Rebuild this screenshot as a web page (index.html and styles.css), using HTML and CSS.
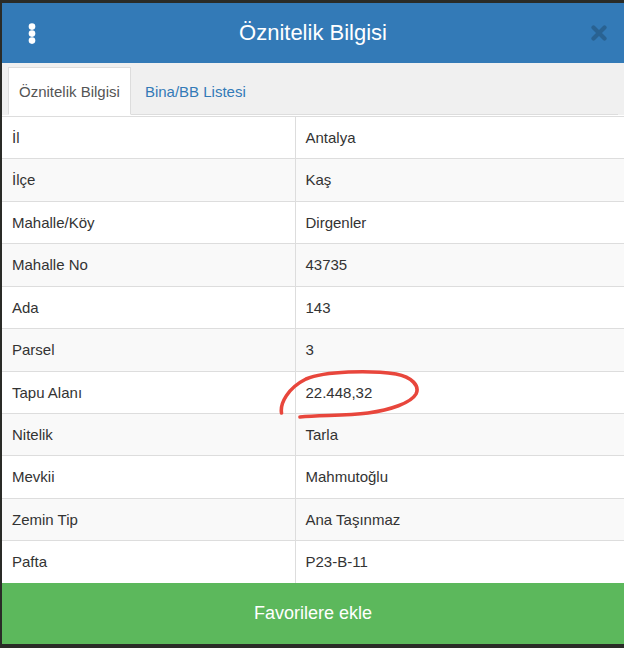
FILE: index.html
```html
<!DOCTYPE html>
<html lang="tr">
<head>
<meta charset="utf-8">
<title>Öznitelik Bilgisi</title>
<link rel="stylesheet" href="styles.css">
</head>
<body>
<div class="panel">
  <header class="header">
    <div class="header-left">
      <svg class="dots" width="10" height="22" viewBox="0 0 10 22" aria-hidden="true">
        <circle cx="5" cy="3.6" r="3.3" fill="#fff"/>
        <circle cx="5" cy="10.6" r="3.3" fill="#fff"/>
        <circle cx="5" cy="17.6" r="3.3" fill="#fff"/>
      </svg>
    </div>
    <h1 class="title">Öznitelik Bilgisi</h1>
    <div class="header-right">
      <svg class="close" width="16" height="16" viewBox="0 0 16 16" aria-hidden="true">
        <path d="M2.5 2.5 L13.5 13.5 M13.5 2.5 L2.5 13.5" stroke="#296292" stroke-width="4.2" stroke-linecap="round"/>
      </svg>
    </div>
  </header>
  <nav class="tabbar">
    <ul class="tabs">
      <li class="tab active">Öznitelik Bilgisi</li>
      <li class="tab">Bina/BB Listesi</li>
    </ul>
  </nav>
  <div class="table-wrap">
    <table class="attr">
      <colgroup><col class="c1"><col></colgroup>
      <tbody>
        <tr><td>İl</td><td>Antalya</td></tr>
        <tr><td>İlçe</td><td>Kaş</td></tr>
        <tr><td>Mahalle/Köy</td><td>Dirgenler</td></tr>
        <tr><td>Mahalle No</td><td>43735</td></tr>
        <tr><td>Ada</td><td>143</td></tr>
        <tr><td>Parsel</td><td>3</td></tr>
        <tr><td>Tapu Alanı</td><td>22.448,32</td></tr>
        <tr><td>Nitelik</td><td>Tarla</td></tr>
        <tr><td>Mevkii</td><td>Mahmutoğlu</td></tr>
        <tr><td>Zemin Tip</td><td>Ana Taşınmaz</td></tr>
        <tr><td>Pafta</td><td>P23-B-11</td></tr>
      </tbody>
    </table>
    <svg class="mark" width="150" height="54" viewBox="0 0 150 54" aria-hidden="true">
      <path d="M11.5 45 C10 35, 18 20, 36 11 C55 3, 100 2, 126 6 C142 9, 150 18, 146 26 C141 35, 120 42, 98 45 C75 48, 50 47, 30 49" fill="none" stroke="#e8463c" stroke-width="3.6" stroke-linecap="round"/>
    </svg>
  </div>
  <button class="fav">Favorilere ekle</button>
</div>
</body>
</html>
```
FILE: styles.css
```css
html, body {
  margin: 0;
  padding: 0;
}
body {
  width: 624px;
  height: 648px;
  background: #2a2b27;
  font-family: "Liberation Sans", Arial, sans-serif;
  color: #333;
  overflow: hidden;
}
.panel {
  margin: 3px 0 0 2px;
  width: 622px;
  display: flex;
  flex-direction: column;
  background: #fff;
}
.header {
  height: 60px;
  background: #337ab7;
  display: grid;
  grid-template-columns: 1fr auto 1fr;
  align-items: center;
}
.header-left {
  padding-left: 25px;
  display: flex;
  align-items: center;
}
.dots {
  display: block;
  margin-top: 1px;
}
.title {
  margin: 0;
  font-size: 22px;
  font-weight: normal;
  color: #fff;
  line-height: 1;
}
.header-right {
  display: flex;
  justify-content: flex-end;
  padding-right: 17px;
}
.close {
  display: block;
  margin-top: 0;
}
.tabbar {
  background: #f0f0f0;
  padding: 4px 6px 0;
}
.tabs {
  list-style: none;
  margin: 0;
  padding: 0;
  display: flex;
  border-bottom: 1px solid #ddd;
}
.tab {
  font-size: 15px;
  line-height: 21px;
  padding: 13px 10px 12px;
  margin-right: 3px;
  margin-bottom: -1px;
  border: 1px solid transparent;
  color: #337ab7;
}
.tab.active {
  background: #fff;
  border-color: #ddd #ddd transparent;
  color: #555;
}
.table-wrap {
  position: relative;
  padding-top: 1px;
}
.attr {
  width: 100%;
  border-collapse: collapse;
  table-layout: fixed;
  font-size: 15px;
  line-height: 1.42857;
}
.attr .c1 {
  width: 293px;
}
.attr td {
  padding: 10px 10px;
  border-top: 1px solid #ddd;
  vertical-align: middle;
}
.attr td + td {
  border-left: 1px solid #ddd;
}
.attr tr:nth-child(even) td {
  background: #f9f9f9;
}
.mark {
  position: absolute;
  left: 268px;
  top: 253px;
  pointer-events: none;
}
.fav {
  display: block;
  width: 100%;
  height: 61px;
  margin: 0;
  border: 0;
  background: #5cb85c;
  color: #fff;
  font-family: "Liberation Sans", Arial, sans-serif;
  font-size: 18px;
  padding: 0;
}
```
